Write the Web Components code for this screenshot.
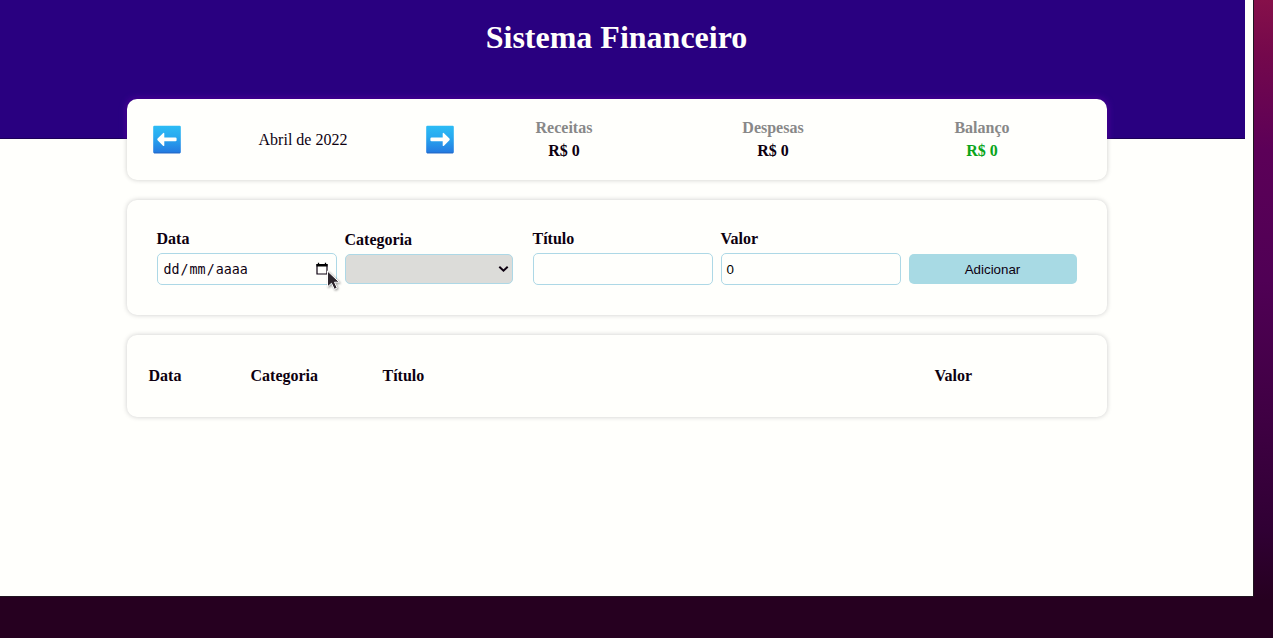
<!DOCTYPE html>
<html lang="pt-BR">
<head>
<meta charset="utf-8">
<title>Sistema Financeiro</title>
<style>
html,body{margin:0;height:100%;overflow:hidden}
body{font:16px/18px "Liberation Serif",serif;color:#0d0010}
</style>
</head>
<body>
<finance-app></finance-app>
<script>
function define(name, html) {
  const t = document.createElement('template');
  t.innerHTML = html;
  customElements.define(name, class extends HTMLElement {
    constructor() {
      super();
      this.attachShadow({ mode: 'open' }).appendChild(t.content.cloneNode(true));
    }
  });
}

define('page-header', `<style>
:host{display:block;box-sizing:border-box;width:1245px;height:139px;padding:19px 12px 0 0;background:#290080;border-bottom:1px solid #1c0058;text-align:center}
h1{margin:0;font-size:32px;line-height:37px;font-weight:700;color:#fffffc}
</style><h1><slot></slot></h1>`);

define('app-card', `<style>
:host{display:flex;box-sizing:border-box;width:980px;border-radius:10px;background:#fffffc;box-shadow:0 0 5px #ccc}
</style><slot></slot>`);

define('month-arrow', `<style>
:host{display:block;width:28px;height:29px}
:host([next]) svg{transform:scaleX(-1)}
svg{display:block}
</style><svg width="28" height="29" viewBox="0 -.5 28 29">
<defs><linearGradient id="g" x1="0" y1="0" x2="0" y2="1"><stop offset="0" stop-color="#2dbcf5"/><stop offset=".4" stop-color="#28aaf0"/><stop offset="1" stop-color="#2478e0"/></linearGradient></defs>
<rect x=".2" y=".2" width="27.6" height="27.6" rx="1.2" fill="url(#g)"/>
<path d="M1 27.4H27" stroke="#2464bc" stroke-width=".8"/>
<path d="M4.6 13.1L10 7.7Q11.3 6.8 11.3 8.3V12.1H22.4Q23.6 12.1 23.6 13.1V14.7Q23.6 15.8 22.4 15.8H11.3V19.7Q11.3 21.1 10 20.2L4.6 14.8Q3.8 13.9 4.6 13.1Z" fill="#fffffc"/>
</svg>`);

define('month-picker', `<style>
:host{display:flex;align-items:center;justify-content:space-between;width:301px}
</style><month-arrow></month-arrow><span><slot></slot></span><month-arrow next></month-arrow>`);

define('resume-item', `<style>
:host{display:flex;flex-direction:column;gap:5px;align-items:center;font-weight:700}
.t{color:#888}
.v{color:var(--value,#0d0010)}
</style><span class="t"><slot name="title"></slot></span><span class="v"><slot></slot></span>`);

define('form-field', `<style>
:host{display:flex;flex-direction:column;gap:5px;font-weight:700}
</style><span><slot name="label"></slot></span><slot></slot>`);

define('text-box', `<style>
:host{display:flex;align-items:center;box-sizing:border-box;width:180px;height:32px;padding:0 5px;border:1px solid #add8e6;border-radius:5px;font:400 13.333px "Liberation Sans",sans-serif;color:#000}
</style><slot></slot>`);

define('date-box', `<style>
:host{display:flex;align-items:center;justify-content:space-between;box-sizing:border-box;width:180px;height:32px;padding:0 7px 0 5px;border:1px solid #add8e6;border-radius:5px;font:400 13.333px "DejaVu Sans Mono",monospace;color:#0d0010}
.p{padding:0 1px}
</style><span><span class="p">dd</span>/<span class="p">mm</span>/<span class="p">aaaa</span></span>
<svg width="14" height="14" viewBox="0 0 14 14"><path d="M3.5 .8V3M10.5 .8V3" stroke="#000" stroke-width="1.3"/><path d="M2 2.5H12V12H2Z" fill="none" stroke="#0d0010" stroke-width="1.2"/><path d="M1.5 2H12.5V4.5H1.5Z"/></svg>`);

define('select-box', `<style>
:host{display:flex;align-items:center;justify-content:flex-end;box-sizing:border-box;width:168px;height:30px;padding-right:3px;border:1px solid #add8e6;border-radius:5px;background:#dcdcd9}
</style><svg width="11" height="8" viewBox="0 0 11 8"><path d="M1.3 1.8L5.5 5.7L9.7 1.8" fill="none" stroke="#0d0010" stroke-width="2"/></svg>`);

define('add-button', `<style>
:host{display:flex;align-items:center;justify-content:center;width:168px;height:30px;border-radius:5px;background:#a8dae4;font:400 13.333px "Liberation Sans",sans-serif;color:#0d0010}
</style><slot></slot>`);

define('mouse-pointer', `<style>
:host{display:block;position:absolute;left:324px;top:268px;width:20px;height:26px}
svg{filter:drop-shadow(1px 1px 1px rgba(0,0,0,.4))}
</style><svg width="20" height="26" viewBox="0 0 20 26"><path d="M3.5 3V18.8L7.5 15.3L10.3 21.3L13.2 20L10.5 14.2H15.3Z" fill="#2c252c" stroke="#fff" stroke-width="1"/></svg>`);

define('finance-app', `<style>
:host{display:block;box-sizing:border-box;width:1273px;height:638px;padding:0 20px 42px 0;isolation:isolate;
background:linear-gradient(#260020,#260020) 0 100%/1253px 42px no-repeat,linear-gradient(#86104a 0,#74084c 55px,#5c0058 150px,#500055 280px,#400044 410px,#300034 530px,#260020 600px)}
.page{height:596px;position:relative;z-index:-1;background:#fffffc;box-shadow:0 0 0 1px #201420}
page-header{position:relative;z-index:-2}
.body{display:flex;flex-direction:column;gap:20px;width:980px;margin:-40px 0 0 126.5px}
.sum{height:81px;align-items:center;position:relative;box-shadow:0 0 5px rgba(0,0,0,.2);padding-left:26px}
/* purple glow where the card overlaps the header */
.sum::before{content:"";position:absolute;inset:0;border-radius:10px;box-shadow:0 0 6px 1px #5500a8;clip-path:inset(-8px -8px 41px -8px);z-index:-1}
.items{display:grid;grid-template-columns:219px 199px 219px;justify-items:center;justify-content:start;flex:1;margin-left:1px}
.form{height:115px;padding:30px;align-items:flex-start}
.form form-field{margin-right:8px}
.form .cat{margin-top:1px;margin-right:20px}
.form add-button{margin-top:24px}
.table{height:82px;align-items:center;padding-left:22px;font-weight:700}
.table span{flex:none;width:var(--w)}
</style>
<div class="page">
<page-header>Sistema Financeiro</page-header>
<div class="body">
<app-card class="sum"><month-picker>Abril de 2022</month-picker>
<div class="items">
<resume-item><span slot="title">Receitas</span>R$ 0</resume-item>
<resume-item><span slot="title">Despesas</span>R$ 0</resume-item>
<resume-item style="--value:#0aa51a"><span slot="title">Balanço</span>R$ 0</resume-item>
</div></app-card>
<app-card class="form">
<form-field><span slot="label">Data</span><date-box></date-box></form-field>
<form-field class="cat"><span slot="label">Categoria</span><select-box></select-box></form-field>
<form-field><span slot="label">Título</span><text-box></text-box></form-field>
<form-field><span slot="label">Valor</span><text-box>0</text-box></form-field>
<add-button>Adicionar</add-button>
</app-card>
<app-card class="table"><span style="--w:102px">Data</span><span style="--w:132px">Categoria</span><span style="--w:552px">Título</span><span>Valor</span></app-card>
</div>
</div>
<mouse-pointer></mouse-pointer>`);
</script>
</body>
</html>
